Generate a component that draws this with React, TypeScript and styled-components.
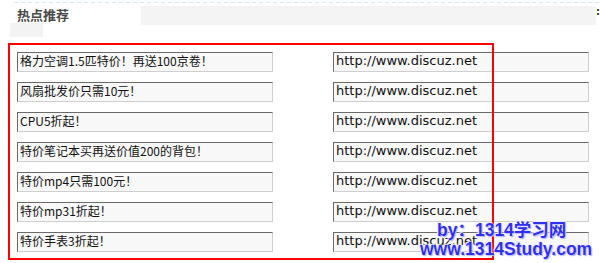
import React from "react";
import styled, { createGlobalStyle } from "styled-components";

const Global = createGlobalStyle`
  html, body { margin: 0; padding: 0; background: #fff; }
  body { width: 600px; height: 263px; overflow: hidden; font-family: "DejaVu Sans", "Noto Sans CJK SC", sans-serif; }
`;

const Page = styled.div`
  position: relative;
  width: 600px;
  height: 263px;
  overflow: hidden;
`;

const Header = styled.div`
  position: relative;
  height: 43px;
`;

const DashedLine = styled.div`
  margin: 2px 0 0 14px;
  height: 1px;
  background: repeating-linear-gradient(90deg, #d2eafb 0 4px, transparent 4px 7px);
`;

const HeaderBody = styled.div`
  display: flex;
  align-items: flex-start;
`;

const TitleCol = styled.div`
  display: flex;
  flex-direction: column;
  width: 141px;
`;

const Title = styled.div`
  margin: 3px 0 0 17px;
  font-family: "Noto Sans CJK SC", sans-serif;
  font-weight: 700;
  font-size: 13px;
  line-height: 17px;
  color: #4a4a4a;
`;

const SmallBlock = styled.div`
  margin: 0 0 0 10px;
  width: 33px;
  height: 14px;
  background: #f3f3f3;
`;

const HeaderBar = styled.div`
  margin-top: 3px;
  width: 457px;
  height: 19px;
  background: #f4f4f4;
`;

const Colon = styled.div`
  margin-top: 4px;
  font-family: "DejaVu Sans", sans-serif;
  font-weight: 700;
  font-size: 10px;
  line-height: 10px;
  color: #333;
`;

const Rows = styled.div`
  display: flex;
  flex-direction: column;
  gap: 10px;
  padding: 7px 0 0 17px;
`;

const Row = styled.div`
  display: flex;
  gap: 60px;
`;

const Field = styled.input<{ $url?: boolean }>`
  box-sizing: border-box;
  width: 256px;
  height: 20px;
  margin: 0;
  padding: 0 2px 3px 2px;
  border-style: solid;
  border-width: 1px;
  border-color: #6a6a6a #cfcfcf #cfcfcf #6a6a6a;
  background: #f8f8f8;
  color: #111;
  font-family: ${(p) => (p.$url ? `"DejaVu Sans", sans-serif` : `"Noto Sans CJK SC", sans-serif`)};
  font-size: ${(p) => (p.$url ? "13px" : "12px")};
  outline: none;
`;

const RedFrame = styled.div`
  position: absolute;
  left: 8px;
  top: 43px;
  width: 486px;
  height: 217px;
  box-sizing: border-box;
  border: 2px solid #ff0000;
  pointer-events: none;
`;

const Watermark = styled.div`
  position: absolute;
  left: 420px;
  top: 221px;
  display: flex;
  flex-direction: column;
  font-family: "Liberation Sans", "Noto Sans CJK SC", sans-serif;
  font-weight: 700;
  font-size: 17.5px;
  line-height: 19px;
  color: #2f2ff0;
  text-shadow: 0 0 1px #ffffff, 0 0 2px #ffffff, 1px 1px 1px #9a9aff, -1px -1px 1px #e6e6ff;
  pointer-events: none;
`;

const WLine = styled.div<{ $indent: number }>`
  padding-left: ${(p) => p.$indent}px;
  white-space: nowrap;
`;

const items = [
  "格力空调1.5匹特价！再送100京卷！",
  "风扇批发价只需10元！",
  "CPU5折起！",
  "特价笔记本买再送价值200的背包！",
  "特价mp4只需100元！",
  "特价mp31折起！",
  "特价手表3折起！",
];

export default function App() {
  return (
    <Page>
      <Global />
      <Header>
        <DashedLine />
        <HeaderBody>
          <TitleCol>
            <Title>热点推荐</Title>
            <SmallBlock />
          </TitleCol>
          <HeaderBar />
          <Colon>:</Colon>
        </HeaderBody>
      </Header>
      <Rows>
        {items.map((t, i) => (
          <Row key={i}>
            <Field readOnly value={t} />
            <Field $url readOnly value="http://www.discuz.net" />
          </Row>
        ))}
      </Rows>
      <RedFrame />
      <Watermark>
        <WLine $indent={17}>by：1314学习网</WLine>
        <WLine $indent={0}>www.1314Study.com</WLine>
      </Watermark>
    </Page>
  );
}
